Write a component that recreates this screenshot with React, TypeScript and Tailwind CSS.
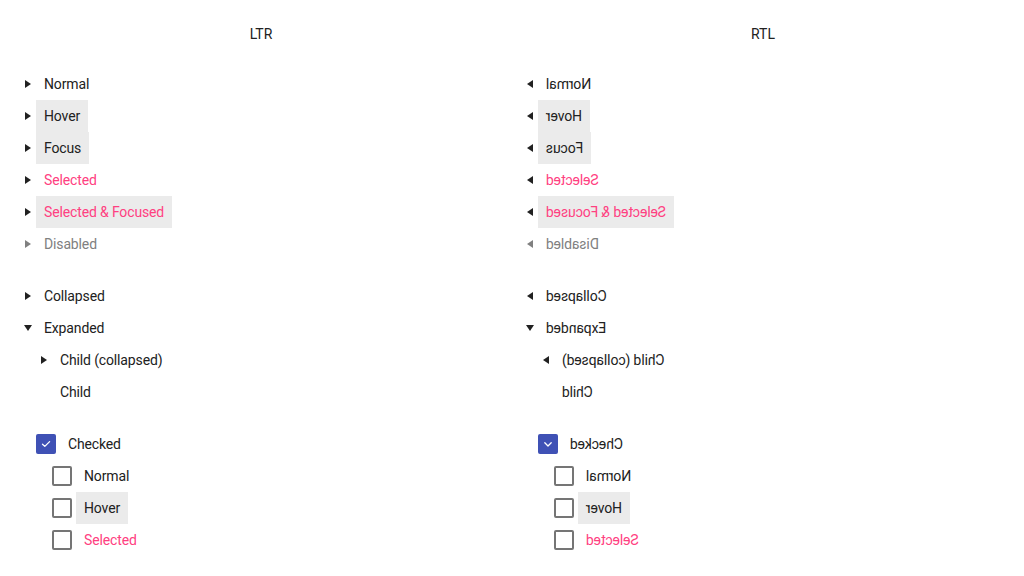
import type { ReactNode } from 'react'

type State = 'normal' | 'hover' | 'focus' | 'selected' | 'selfocus' | 'disabled'

const textColor: Record<State, string> = {
  normal: 'text-[#212121]',
  hover: 'text-[#212121] bg-[#ebebeb]',
  focus: 'text-[#212121] bg-[#ebebeb]',
  selected: 'text-[#ff4081]',
  selfocus: 'text-[#ff4081] bg-[#ebebeb]',
  disabled: 'text-[#808080]',
}

function Arrow({ dir, disabled }: { dir: 'right' | 'left' | 'down'; disabled?: boolean }) {
  const fill = disabled ? '#808080' : '#212121'
  if (dir === 'down') {
    return (
      <svg width="8" height="6" viewBox="0 0 8 6">
        <polygon points="0,0 8,0 4,6" fill={fill} />
      </svg>
    )
  }
  return (
    <svg width="6" height="8" viewBox="0 0 6 8">
      <polygon points={dir === 'right' ? '0,0 6,4 0,8' : '6,0 0,4 6,8'} fill={fill} />
    </svg>
  )
}

function Label({ children, state, rtl }: { children: ReactNode; state: State; rtl: boolean }) {
  return (
    <span className={`h-8 px-2 flex items-center tracking-[-0.01em] ${textColor[state]}`}>
      <span className={rtl ? 'inline-block [transform:scaleX(-1)]' : ''}>{children}</span>
    </span>
  )
}

function TreeRow({
  label,
  state = 'normal',
  rtl,
  indent = 0,
  toggle = 'collapsed',
}: {
  label: string
  state?: State
  rtl: boolean
  indent?: number
  toggle?: 'collapsed' | 'expanded' | 'leaf'
}) {
  return (
    <div className={`flex items-center h-8 ${indent ? 'pl-[26px]' : 'pl-[10px]'}`}>
      <span className="w-4 flex items-center justify-center">
        {toggle === 'expanded' && <Arrow dir="down" />}
        {toggle === 'collapsed' && (
          <Arrow dir={rtl ? 'left' : 'right'} disabled={state === 'disabled'} />
        )}
      </span>
      <Label state={state} rtl={rtl}>
        {label}
      </Label>
    </div>
  )
}

function CheckRow({
  label,
  state = 'normal',
  rtl,
  checked,
  indent,
}: {
  label: string
  state?: State
  rtl: boolean
  checked?: boolean
  indent?: boolean
}) {
  return (
    <div className={`flex items-center h-8 ${indent ? 'pl-[42px]' : 'pl-[26px]'}`}>
      {checked ? (
        <span className="w-5 h-5 rounded-[2px] bg-[#3f51b5] flex items-center justify-center">
          <svg width="20" height="20" viewBox="0 0 20 20" fill="none">
            <path
              d={rtl ? 'M6.8 8.8 L10 12 L13.2 8.8' : 'M6.5 10.2 L8.8 12.4 L13.6 7.6'}
              stroke="white"
              strokeWidth="1.3"
              strokeLinecap="round"
              strokeLinejoin="round"
            />
          </svg>
        </span>
      ) : (
        <span className="w-5 h-5 rounded-[2px] border-2 border-[#757575]" />
      )}
      <span className="ml-1">
        <Label state={state} rtl={rtl}>
          {label}
        </Label>
      </span>
    </div>
  )
}

function Column({ rtl }: { rtl: boolean }) {
  return (
    <div>
      <div className="pt-6 h-11 leading-5 text-center text-[#212121]">{rtl ? 'RTL' : 'LTR'}</div>
      <div className="mt-6">
        <TreeRow rtl={rtl} label="Normal" />
        <TreeRow rtl={rtl} label="Hover" state="hover" />
        <TreeRow rtl={rtl} label="Focus" state="focus" />
        <TreeRow rtl={rtl} label="Selected" state="selected" />
        <TreeRow rtl={rtl} label="Selected & Focused" state="selfocus" />
        <TreeRow rtl={rtl} label="Disabled" state="disabled" />
      </div>
      <div className="mt-5">
        <TreeRow rtl={rtl} label="Collapsed" />
        <TreeRow rtl={rtl} label="Expanded" toggle="expanded" />
        <TreeRow rtl={rtl} label="Child (collapsed)" indent={1} />
        <TreeRow rtl={rtl} label="Child" indent={1} toggle="leaf" />
      </div>
      <div className="mt-5">
        <CheckRow rtl={rtl} label="Checked" checked />
        <CheckRow rtl={rtl} label="Normal" indent />
        <CheckRow rtl={rtl} label="Hover" state="hover" indent />
        <CheckRow rtl={rtl} label="Selected" state="selected" indent />
      </div>
    </div>
  )
}

export default function App() {
  return (
    <div className="w-[1024px] h-[576px] bg-white overflow-hidden px-[10px] grid grid-cols-2 text-sm font-['Roboto',sans-serif]">
      <Column rtl={false} />
      <Column rtl />
    </div>
  )
}
